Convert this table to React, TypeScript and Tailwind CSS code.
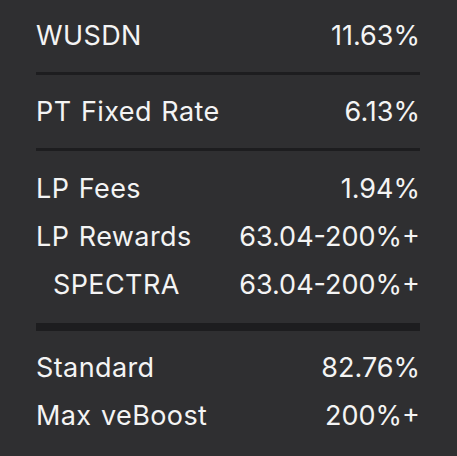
const groups = [
  [{ label: "WUSDN", value: "11.63%" }],
  [{ label: "PT Fixed Rate", value: "6.13%" }],
  [
    { label: "LP Fees", value: "1.94%" },
    { label: "LP Rewards", value: "63.04-200%+" },
    { label: "SPECTRA", value: "63.04-200%+", indent: true },
  ],
  [
    { label: "Standard", value: "82.76%" },
    { label: "Max veBoost", value: "200%+" },
  ],
];

function Row({ label, value, indent }: { label: string; value: string; indent?: boolean }) {
  return (
    <div className="flex h-12 items-center justify-between leading-[48px]">
      <span className={indent ? "pl-[17px] tracking-[0.4px] [word-spacing:1.5px]" : "tracking-[0.4px] [word-spacing:1.5px]"}>
        {label}
      </span>
      <span>{value}</span>
    </div>
  );
}

export default function App() {
  return (
    <div className="h-[456px] w-[457px] bg-[#2f2f31] pl-9 pr-[37px] pt-3 text-[27px] text-[#f4f4f4] font-['Inter',sans-serif]">
      {groups[0].map((r) => (
        <Row key={r.label} {...r} />
      ))}
      <div className="mt-3 mb-[13px] h-[3px] bg-[#1d1d1f]" />
      {groups[1].map((r) => (
        <Row key={r.label} {...r} />
      ))}
      <div className="mt-3 mb-[14px] h-[3px] bg-[#1d1d1f]" />
      {groups[2].map((r) => (
        <Row key={r.label} {...r} />
      ))}
      <div className="mt-[14px] mb-[13px] h-2 bg-[#1d1d1f]" />
      {groups[3].map((r) => (
        <Row key={r.label} {...r} />
      ))}
    </div>
  );
}
